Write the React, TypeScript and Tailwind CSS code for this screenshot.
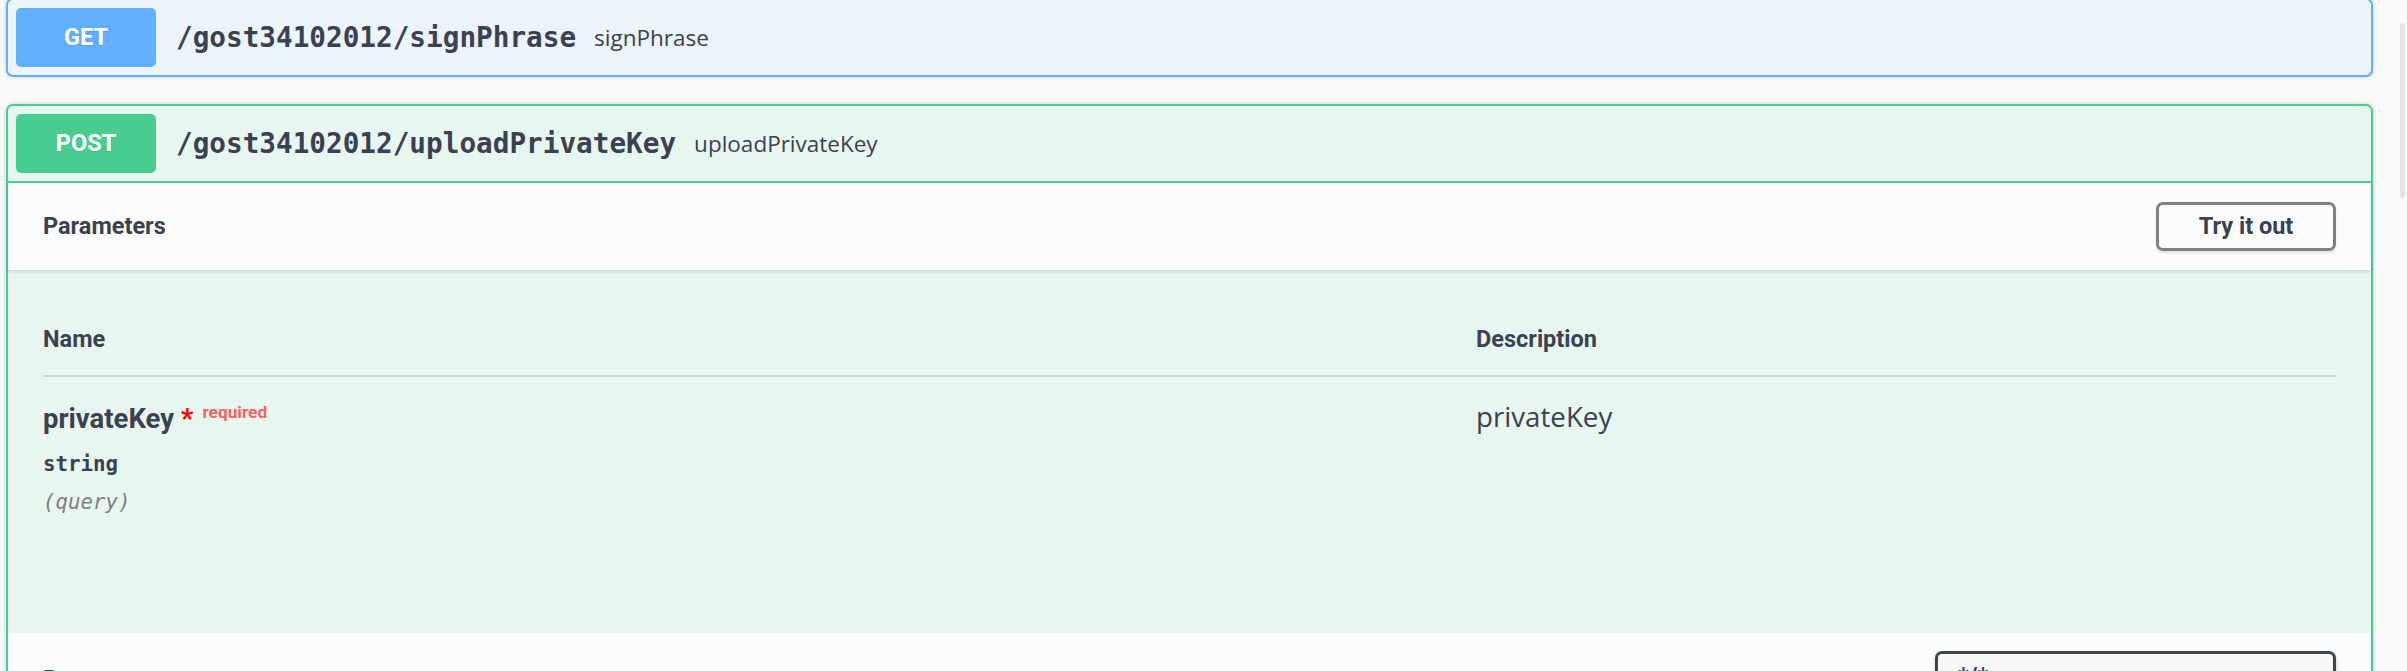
import React from "react";

type Method = "GET" | "POST";

const methodStyles: Record<Method, { box: string; badge: string }> = {
  GET: {
    box: "border-[#61affe] bg-[#ebf3fb]",
    badge: "bg-[#61affe]",
  },
  POST: {
    box: "border-[#49cc90] bg-[#e8f6f0]",
    badge: "bg-[#49cc90]",
  },
};

function Summary({
  method,
  path,
  description,
  open,
}: {
  method: Method;
  path: string;
  description: string;
  open?: boolean;
}) {
  return (
    <div
      className={`flex items-center p-[8px] ${
        open ? "border-b-2 border-[#49cc90]" : ""
      }`}
    >
      <span
        className={`flex h-[59px] w-[140px] items-center justify-center rounded-[5px] font-['Roboto',sans-serif] text-[23.5px] font-bold text-white [text-shadow:0_1px_0_rgba(0,0,0,0.1)] ${methodStyles[method].badge}`}
      >
        {method}
      </span>
      <span className="ml-[20px] font-['DejaVu_Sans_Mono',monospace] text-[27.7px] font-bold text-[#3b4151]">
        {path}
      </span>
      <span className="ml-[18px] font-['Open_Sans',sans-serif] text-[22.5px] text-[#3b4151]">
        {description}
      </span>
    </div>
  );
}

export default function App() {
  return (
    <div className="relative h-[671px] w-full overflow-hidden bg-[#fafafa] text-[#3b4151]">
      <div className="ml-[6px] -mt-[2px] w-[2367px]">
        {/* GET block (collapsed) */}
        <div
          className={`mb-[27px] rounded-[7px] border-2 shadow-[0_0_4px_rgba(0,0,0,0.19)] ${methodStyles.GET.box}`}
        >
          <Summary
            method="GET"
            path="/gost34102012/signPhrase"
            description="signPhrase"
          />
        </div>

        {/* POST block (expanded) */}
        <div
          className={`rounded-[7px] border-2 shadow-[0_0_4px_rgba(0,0,0,0.19)] ${methodStyles.POST.box}`}
        >
          <Summary
            method="POST"
            path="/gost34102012/uploadPrivateKey"
            description="uploadPrivateKey"
            open
          />

          {/* Parameters header */}
          <div className="relative flex h-[87px] items-center justify-between bg-white/80 px-[35px] shadow-[0_2px_3px_rgba(0,0,0,0.12)]">
            <h4 className="font-['Roboto',sans-serif] text-[23.5px] font-bold">
              Parameters
            </h4>
            <button className="flex h-[49px] w-[180px] items-center justify-center rounded-[7px] border-[3.5px] border-[#808080] bg-transparent font-['Roboto',sans-serif] text-[23.5px] font-bold text-[#3b4151] shadow-[0_2px_3px_rgba(0,0,0,0.1)]">
              Try it out
            </button>
          </div>

          {/* Parameters table */}
          <div className="h-[363px] px-[35px] pt-[35px]">
            <div className="flex border-b-2 border-[#cad5d2] pt-[20px] pb-[21px] font-['Roboto',sans-serif] text-[23.5px] font-bold leading-[29px]">
              <div className="w-[1433px]">Name</div>
              <div className="flex-1">Description</div>
            </div>
            <div className="flex">
              <div className="w-[1433px] pt-[25px]">
                <div className="font-['Roboto',sans-serif] text-[27.5px] font-bold leading-[34px]">
                  privateKey <span className="text-[#ff0000]">*</span>
                  <span className="relative -top-[10px] pl-[9px] text-[17.3px] text-[#f66260]">
                    required
                  </span>
                </div>
                <div className="mt-[10px] font-['DejaVu_Sans_Mono',monospace] text-[20.8px] font-bold leading-[30px]">
                  string
                </div>
                <div className="mt-[8px] font-['DejaVu_Sans_Mono',monospace] text-[20.8px] italic leading-[30px] text-[#808080]">
                  (query)
                </div>
              </div>
              <div className="flex-1 pt-[24px] font-['Open_Sans',sans-serif] text-[27.7px] leading-[30px]">
                privateKey
              </div>
            </div>
          </div>

          {/* Responses header */}
          <div className="flex h-[87px] items-center justify-between bg-white/80 px-[35px]">
            <h4 className="pt-[5px] font-['Roboto',sans-serif] text-[23.5px] font-bold leading-[29px]">
              Responses
            </h4>
            <div className="flex h-[51px] w-[401px] items-center rounded-[7px] border-[3.5px] border-[#41444e] bg-[#f7f7f7] px-[20px] font-['Roboto',sans-serif] text-[23.5px] font-bold shadow-[0_2px_3px_rgba(0,0,0,0.25)]">
              */*
            </div>
          </div>
        </div>
      </div>

      {/* scrollbar thumb */}
      <div className="absolute right-[2px] top-[23px] h-[175px] w-[5px] rounded-full bg-[#e6e6e6]" />
    </div>
  );
}
